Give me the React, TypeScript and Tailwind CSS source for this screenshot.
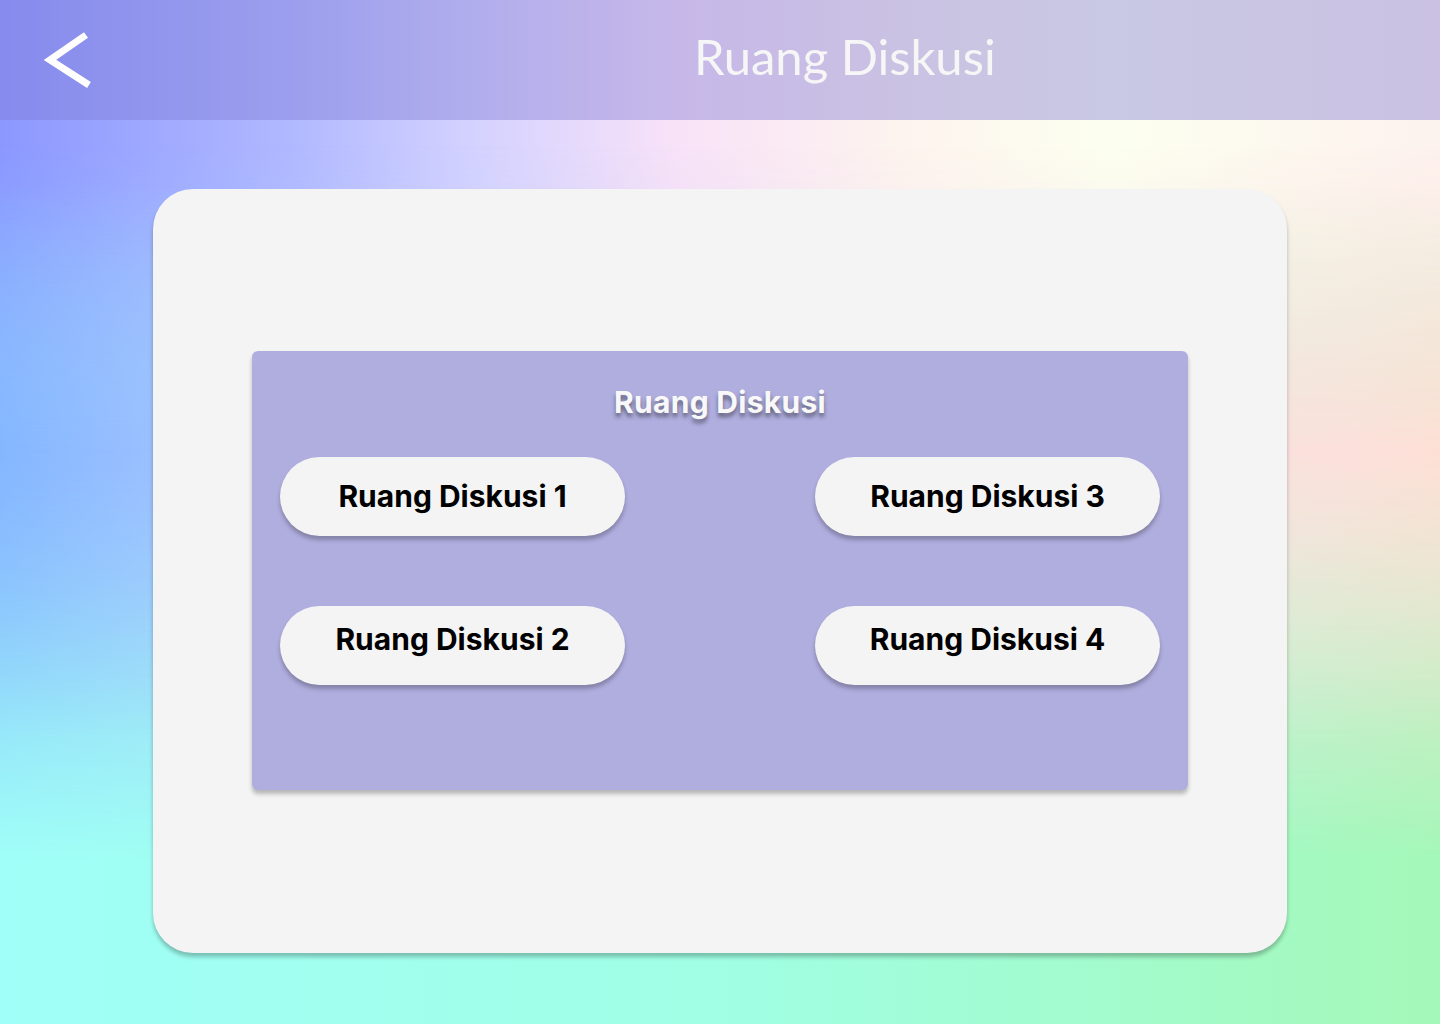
import React from "react";

const rooms = [
    ["Ruang Diskusi 1", "Ruang Diskusi 3"],
    ["Ruang Diskusi 2", "Ruang Diskusi 4"],
];

const BackIcon: React.FC = () => (
    <svg width="60" height="60" viewBox="0 0 60 60" fill="none">
        <polyline
            points="48,6 12,31 51,56"
            stroke="white"
            strokeWidth="7"
            strokeLinejoin="miter"
            strokeLinecap="butt"
            fill="none"
        />
    </svg>
);

const RoomButton: React.FC<{ label: string; lower?: boolean }> = ({ label, lower }) => (
    <button
        type="button"
        className={`w-[345px] h-[79px] rounded-full bg-[#f4f4f4] shadow-[0_4px_4px_rgba(0,0,0,0.25)] flex items-center justify-center text-[30px] leading-[36px] font-bold text-black font-['Inter',sans-serif] ${
            lower ? "pb-[12px]" : ""
        }`}
    >
        {label}
    </button>
);

const App: React.FC = () => {
    return (
        <div className="relative w-full h-screen overflow-hidden flex flex-col bg-[linear-gradient(90deg,#a0fff8_0%,#a0ffe4_50%,#a4f8b8_100%)]">
            {/* background layers */}
            <div className="absolute inset-0 bg-[linear-gradient(90deg,#8c98ff_0%,#b0b8ff_20%,#d4d2ff_33%,#f8e2f8_47%,#fdf4ee_63%,#fcfff0_77%,#fdf2ee_100%)] [mask-image:linear-gradient(to_bottom,black_0%,black_18%,transparent_72%)]" />
            <div className="absolute inset-0 bg-[linear-gradient(90deg,#84b6ff_0%,#c2d0ff_30%,#f4e4f0_60%,#fddfd6_100%)] [mask-image:linear-gradient(to_bottom,transparent_14%,black_44%,transparent_84%)]" />

            <header className="relative h-[120px] shrink-0 flex items-center bg-[rgba(125,120,210,0.4)]">
                <button type="button" className="ml-[38px] mt-[-2px]">
                    <BackIcon />
                </button>
                <h1 className="ml-[596px] mb-[6px] text-[49px] font-normal text-[#f6f6f6] font-['Lato',sans-serif]">
                    Ruang Diskusi
                </h1>
            </header>

            <main className="relative flex-1 flex items-center justify-center">
                <div className="mb-[2px] w-[1134px] h-[764px] rounded-[40px] bg-[#f4f4f4] shadow-[0_4px_4px_rgba(0,0,0,0.25)] flex items-center justify-center pb-[2px]">
                    <div className="w-[936px] h-[439px] rounded-[6px] bg-[#b0aedf] shadow-[0_4px_4px_rgba(0,0,0,0.25)] flex flex-col items-center pt-[33px] px-[28px]">
                        <h2 className="text-[30px] leading-[36px] font-bold tracking-[0.3px] text-[#f8f8f8] font-['Inter',sans-serif] [text-shadow:0_4px_4px_rgba(0,0,0,0.45)]">
                            Ruang Diskusi
                        </h2>
                        <div className="mt-[37px] w-full flex flex-col gap-[70px]">
                            {rooms.map((row, i) => (
                                <div key={i} className="flex justify-between">
                                    {row.map(label => (
                                        <RoomButton key={label} label={label} lower={i === 1} />
                                    ))}
                                </div>
                            ))}
                        </div>
                    </div>
                </div>
            </main>
        </div>
    );
};

export default App;
